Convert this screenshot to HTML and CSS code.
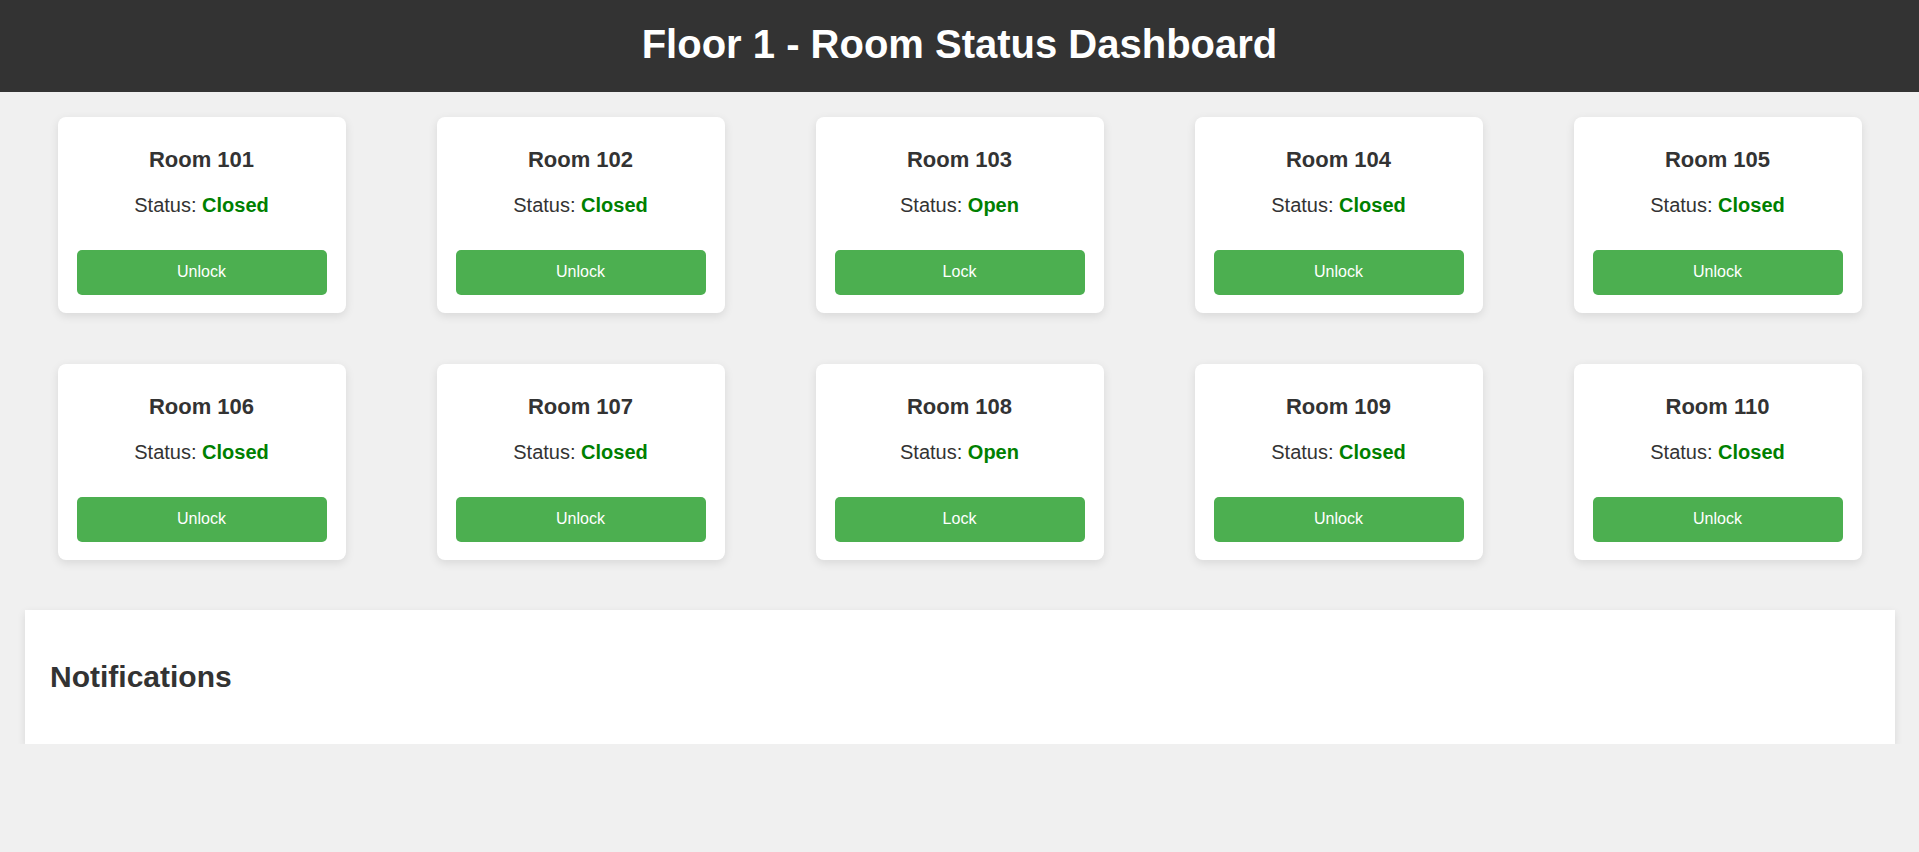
FILE: index.html
```html
<!DOCTYPE html>
<html lang="en">
<head>
<meta charset="utf-8">
<title>Floor 1 - Room Status Dashboard</title>
<link rel="stylesheet" href="styles.css">
</head>
<body>
<header class="topbar">
  <h1 class="topbar-title">Floor 1 - Room Status Dashboard</h1>
</header>
<main class="rooms">
  <div class="room-card"><h3 class="room-name">Room 101</h3><p class="room-status">Status: <span class="status-value">Closed</span></p><button class="room-btn">Unlock</button></div>
  <div class="room-card"><h3 class="room-name">Room 102</h3><p class="room-status">Status: <span class="status-value">Closed</span></p><button class="room-btn">Unlock</button></div>
  <div class="room-card"><h3 class="room-name">Room 103</h3><p class="room-status">Status: <span class="status-value">Open</span></p><button class="room-btn">Lock</button></div>
  <div class="room-card"><h3 class="room-name">Room 104</h3><p class="room-status">Status: <span class="status-value">Closed</span></p><button class="room-btn">Unlock</button></div>
  <div class="room-card"><h3 class="room-name">Room 105</h3><p class="room-status">Status: <span class="status-value">Closed</span></p><button class="room-btn">Unlock</button></div>
  <div class="room-card"><h3 class="room-name">Room 106</h3><p class="room-status">Status: <span class="status-value">Closed</span></p><button class="room-btn">Unlock</button></div>
  <div class="room-card"><h3 class="room-name">Room 107</h3><p class="room-status">Status: <span class="status-value">Closed</span></p><button class="room-btn">Unlock</button></div>
  <div class="room-card"><h3 class="room-name">Room 108</h3><p class="room-status">Status: <span class="status-value">Open</span></p><button class="room-btn">Lock</button></div>
  <div class="room-card"><h3 class="room-name">Room 109</h3><p class="room-status">Status: <span class="status-value">Closed</span></p><button class="room-btn">Unlock</button></div>
  <div class="room-card"><h3 class="room-name">Room 110</h3><p class="room-status">Status: <span class="status-value">Closed</span></p><button class="room-btn">Unlock</button></div>
</main>
<section class="notifications">
  <h2 class="notifications-title">Notifications</h2>
</section>
</body>
</html>
```
FILE: styles.css
```css
* { box-sizing: border-box; }

body {
  margin: 0;
  background: #f0f0f0;
  font-family: "Liberation Sans", Arial, sans-serif;
  color: #333;
}

.topbar {
  background: #333;
  height: 92px;
  display: flex;
  align-items: center;
  justify-content: center;
}

.topbar-title {
  margin: 0;
  color: #fff;
  font-size: 40px;
  line-height: 46px;
  font-weight: bold;
  position: relative;
  top: -2px;
}

.rooms {
  display: grid;
  grid-template-columns: repeat(5, 1fr);
  justify-items: center;
  row-gap: 51px;
  padding: 25px 12px 0;
}

.room-card {
  width: 288px;
  background: #fff;
  border-radius: 8px;
  box-shadow: 0 3px 10px rgba(0, 0, 0, 0.1);
  padding: 20px 19px 18px;
  display: flex;
  flex-direction: column;
  align-items: stretch;
  text-align: center;
}

.room-name {
  margin: 10px 0 0;
  font-size: 22px;
  line-height: 25px;
  font-weight: bold;
  color: #333;
}

.room-status {
  margin: 22px 0 0;
  font-size: 20px;
  line-height: 23px;
  color: #333;
}

.status-value {
  color: #008000;
  font-weight: bold;
}

.room-btn {
  margin-top: 33px;
  height: 45px;
  border: none;
  border-radius: 5px;
  background: #4caf50;
  color: #fff;
  font-family: "Liberation Sans", Arial, sans-serif;
  font-size: 16px;
  padding: 0 0 2px;
}

.notifications {
  margin: 50px 24px 0 25px;
  background: #fff;
  box-shadow: 0 3px 8px rgba(0, 0, 0, 0.1);
  padding: 25px;
}

.notifications-title {
  margin: 25px 0;
  font-size: 30px;
  line-height: 34px;
  font-weight: bold;
  color: #333;
}
```
